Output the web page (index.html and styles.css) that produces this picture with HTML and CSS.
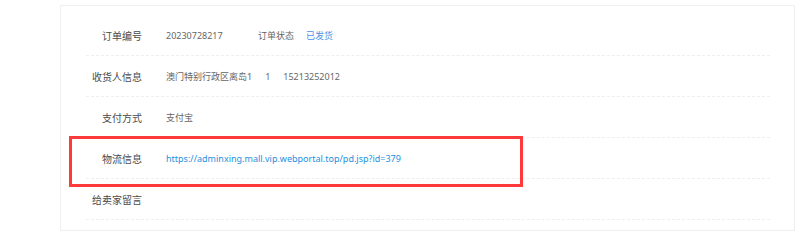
FILE: index.html
```html
<!DOCTYPE html>
<html lang="zh-CN">
<head>
    <meta charset="UTF-8">
    <meta name="viewport" content="width=device-width, initial-scale=1.0">
    <title>订单详情</title>
    <link rel="stylesheet" href="styles.css">
</head>
<body>
    <div class="order-card">
        <div class="info-row">
            <span class="info-label">订单编号</span>
            <span class="info-value order-no">20230728217</span>
            <span class="info-value">订单状态</span>
            <span class="info-value status">已发货</span>
        </div>
        <div class="info-row">
            <span class="info-label">收货人信息</span>
            <span class="info-value">澳门特别行政区离岛1</span>
            <span class="info-value spaced">1</span>
            <span class="info-value spaced">15213252012</span>
        </div>
        <div class="info-row">
            <span class="info-label">支付方式</span>
            <span class="info-value">支付宝</span>
        </div>
        <div class="info-row">
            <span class="info-label">物流信息</span>
            <a class="info-value link" href="#">https://adminxing.mall.vip.webportal.top/pd.jsp?id=379</a>
        </div>
        <div class="info-row">
            <span class="info-label">给卖家留言</span>
        </div>

        <!-- highlight annotation -->
        <div class="highlight-box"></div>
    </div>
</body>
</html>
```

FILE: styles.css
```css
* {
    margin: 0;
    padding: 0;
    box-sizing: border-box;
}

body {
    background: #fff;
    font-family: "Noto Sans", "Noto Sans CJK SC", sans-serif;
}

.order-card {
    position: relative;
    margin: 5px 0 0 60px;
    width: 735px;
    height: 226px;
    border: 1px solid #efefef;
    padding: 9px 24px 0 25px;
}

.info-row {
    display: flex;
    align-items: center;
    height: 41px;
    border-bottom: 1px dashed #eeeeee;
}

.info-label {
    width: 56px;
    text-align: right;
    font-size: 10px;
    color: #4a4a4a;
    margin-right: 24px;
}

.info-value {
    font-size: 9px;
    color: #666;
    text-decoration: none;
}

.order-no {
    width: 92px;
}

.status {
    margin-left: 12px;
    color: #4a8fe7;
}

.spaced {
    margin-left: 13px;
}

.link {
    color: #1e90e0;
}

.highlight-box {
    position: absolute;
    left: 8px;
    top: 130px;
    width: 454px;
    height: 51px;
    border: 3px solid #ff3a3a;
}
```
